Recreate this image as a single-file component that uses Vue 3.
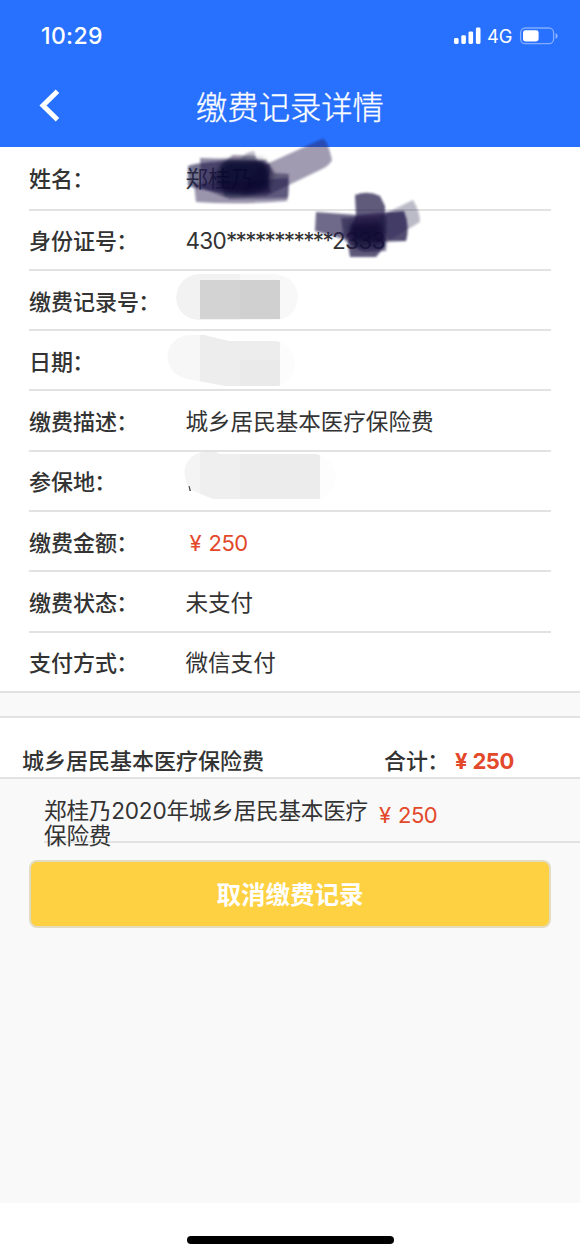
<script setup>
const rows = [
  { label: '姓名', value: '郑桂乃' },
  { label: '身份证号', id: ['430', '***********', '2333'] },
  { label: '缴费记录号' },
  { label: '日期' },
  { label: '缴费描述', value: '城乡居民基本医疗保险费' },
  { label: '参保地' },
  { label: '缴费金额', price: '250' },
  { label: '缴费状态', value: '未支付' },
  { label: '支付方式', value: '微信支付' },
]
</script>

<template>
  <div class="screen">
    <header class="top">
      <div class="status">
        <span class="time">10:29</span>
        <div class="indicators">
          <svg class="signal" width="28" height="18" viewBox="0 0 28 18" fill="#fff">
            <rect x="1" y="11" width="4.6" height="6" rx="1.4" />
            <rect x="8.3" y="8.2" width="4.6" height="8.8" rx="1.4" />
            <rect x="15.5" y="4.4" width="4.6" height="12.6" rx="1.4" />
            <rect x="22.9" y="0.6" width="4.6" height="16.4" rx="1.4" />
          </svg>
          <span class="net">4G</span>
          <svg class="battery" width="40" height="18" viewBox="0 0 40 18">
            <rect x="1.6" y="1" width="33" height="15.6" rx="4.6" fill="none" stroke="#fff" stroke-opacity=".42" stroke-width="1.3" />
            <rect x="4" y="3.2" width="15.6" height="11.2" rx="2.4" fill="#fff" />
            <path d="M36.600 6 Q38.600 7 38.600 9 T36.600 12 Z" fill="#fff" fill-opacity=".5" />
          </svg>
        </div>
      </div>
      <div class="nav">
        <svg class="back" width="24" height="38" viewBox="0 0 24 38">
          <path d="M19.500 4.200 L5 18.500 L19.500 32.700" fill="none" stroke="#fff" stroke-width="5" />
        </svg>
        <h1>缴费记录详情</h1>
      </div>
    </header>

    <section class="details">
      <div v-for="row in rows" :key="row.label" class="row">
        <span class="label">{{ row.label }}<span class="colon">：</span></span>
        <span v-if="row.id" class="value id">{{ row.id[0] }}<span class="stars">{{ row.id[1] }}</span>{{ row.id[2] }}</span>
        <span v-else-if="row.price" class="value price"><span class="yen">¥</span>{{ row.price }}</span>
        <span v-else class="value">{{ row.value }}</span>
      </div>
    </section>

    <div class="gap"></div>

    <section class="total">
      <span class="total-name">城乡居民基本医疗保险费</span>
      <span class="sum">合计<span class="colon">：</span></span>
      <span class="price strong"><span class="yen">¥</span>250</span>
    </section>

    <section class="item">
      <p>郑桂乃2020年城乡居民基本医疗保险费</p>
      <span class="price"><span class="yen">¥</span>250</span>
    </section>

    <button class="cancel">取消缴费记录</button>

    <footer><div class="home"></div></footer>

    <svg class="marks" width="580" height="520" viewBox="0 0 580 520">
      <defs>
        <filter id="soft" x="-10%" y="-10%" width="120%" height="120%"><feGaussianBlur stdDeviation="1.3" /></filter>
        <filter id="softer" x="-20%" y="-20%" width="140%" height="140%"><feGaussianBlur stdDeviation="3" /></filter>
      </defs>
      <g filter="url(#soft)" fill="#211a4a">
        <path d="M258 168 L322 139 Q327 138 332 160 Q330 165 322 169 L266 196 L240 196Z" fill-opacity=".43" />
        <path d="M194 184 L288 178 Q290 190 287 201 Q240 205 196 202Z" fill-opacity=".46" />
        <path d="M188 166 Q210 159 264 162 L271 193 Q220 196 188 186Z" fill-opacity=".62" />
        <path d="M200 158 L266 160 L274 173 L289 174 L288 198 L230 199 L201 188Z" fill-opacity=".5" />
        <path d="M247 153 L254 151 L256 158 L240 159Z" fill-opacity=".3" />
        <path d="M233 155 L255 156 L258 162 L270 164 L268 190 Q246 198 224 196 L220 165Z" fill="#150f3a" fill-opacity=".4" />
      </g>
      <path d="M226 161 L262 160 L272 172 L268 188 Q246 197 224 192 L212 178Z" fill="#080622" fill-opacity=".65" filter="url(#softer)" />
      <g filter="url(#soft)" fill="#211a4a">
        <path d="M376 218 L413 200 Q420 212 420 222 L390 240Z" fill-opacity=".3" />
        <path d="M316 212 L357 215 L404 211 Q410 226 406 241 L380 242 L340 238 L315 231Z" fill-opacity=".66" />
        <path d="M355 195 Q368 190 380 196 L385 206 L385 246 L376 257 L350 257 L347 237 L356 215Z" fill-opacity=".72" />
        <path d="M386 212 L404 211 Q410 226 406 241 L386 240Z" fill-opacity=".35" />
        <path d="M341 218 L387 216 L386 251 L363 252 L344 240Z" fill-opacity=".5" />
      </g>
      <path d="M348 224 L382 222 L384 246 L354 248Z" fill="#080622" fill-opacity=".55" filter="url(#softer)" />

      <clipPath id="pill1"><path d="M199 274 H273 Q297 276 298 297 Q296 318 277 320 H199 Q178 318 176 298 Q178 276 199 274Z" /></clipPath>
      <g clip-path="url(#pill1)">
        <rect x="170" y="270" width="70" height="55" fill="#f2f2f2" />
        <rect x="240" y="270" width="60" height="55" fill="#f8f8f8" />
        <rect x="200" y="280" width="40" height="39" fill="#d3d3d3" />
        <rect x="240" y="280" width="40" height="39" fill="#d0d0d0" />
      </g>

      <clipPath id="pill2"><path d="M188 335 H204 L229 341 H275 Q293 343 295 363 Q294 383 277 386 H225 L187 379 Q168 374 167.500 356 Q169 338 188 335Z" /></clipPath>
      <g clip-path="url(#pill2)">
        <rect x="160" y="330" width="40" height="60" fill="#f7f7f7" />
        <rect x="200" y="330" width="80" height="60" fill="#ededed" />
        <rect x="240" y="360" width="40" height="30" fill="#eaeaea" />
        <rect x="280" y="330" width="20" height="60" fill="#fcfcfc" />
      </g>

      <clipPath id="pill3"><path d="M203 452 H216 L220 454 H317 Q335 460 336 477 Q335 493 320 499 H213 L191 490 Q184 482 184.500 470 Q188 454 203 452Z" /></clipPath>
      <g clip-path="url(#pill3)">
        <rect x="180" y="450" width="20" height="50" fill="#f4f4f4" />
        <rect x="200" y="450" width="40" height="50" fill="#efefef" />
        <rect x="240" y="450" width="80" height="50" fill="#ececec" />
        <rect x="320" y="450" width="20" height="50" fill="#fdfdfd" />
      </g>
      <path d="M188.500 486 h1 l1.500 5 h-1.500Z" fill="#444" />
    </svg>
  </div>
</template>

<style>
body {
  margin: 0;
  background: #fff;
}
</style>

<style scoped>
.screen {
  position: relative;
  display: flex;
  flex-direction: column;
  width: 580px;
  height: 1256px;
  overflow: hidden;
  background: #f9f9f9;
  color: #333;
  font-family: Inter, "Noto Sans CJK SC", sans-serif;
  font-size: 22px;
  box-sizing: border-box;
}
.top {
  flex: none;
  height: 147px;
  background: #2871ff;
  color: #fff;
}
.status {
  display: flex;
  justify-content: space-between;
  align-items: center;
  height: 71px;
  padding: 0 21px 0 41px;
}
.time {
  font-size: 23px;
  font-weight: 500;
  letter-spacing: 0.35px;
}
.indicators {
  display: flex;
  align-items: center;
}
.net {
  width: 38px;
  padding-left: 6px;
  box-sizing: border-box;
  font-size: 18.3px;
  line-height: 20px;
}
.nav {
  display: grid;
  grid-template-columns: 62px 1fr 62px;
  align-items: center;
  height: 70px;
}
.back {
  justify-self: end;
}
h1 {
  margin: 0;
  text-align: center;
  font-size: 31.3px;
  font-weight: 300;
  line-height: 40px;
  padding-top: 4px;
  -webkit-text-stroke: 0.3px #fff;
}
.details {
  flex: none;
  height: 546px;
  display: grid;
  grid-template-rows: 63.6px repeat(7, 60.3px) 1fr;
  background: #fff;
  border-bottom: 2px solid #e2e2e2;
  box-sizing: border-box;
}
.row {
  display: flex;
  align-items: center;
  margin: 0 29px;
  border-bottom: 2px solid #e2e2e2;
  padding-top: 3px;
  box-sizing: border-box;
  line-height: 32px;
}
.row:last-child {
  border-bottom: 0;
}
.label {
  width: 156.5px;
  font-weight: 500;
  white-space: nowrap;
}
.colon {
  margin-left: -0.8px;
}
.value {
  font-size: 22.55px;
  white-space: nowrap;
}
.id {
  letter-spacing: -0.75px;
}
.stars {
  letter-spacing: -1.65px;
}
.price {
  color: #e3482b;
  font-size: 22px;
  letter-spacing: -0.5px;
}
.yen {
  display: inline-block;
  width: 19px;
}
.value.price {
  padding-left: 4px;
}
.gap {
  flex: none;
  height: 23px;
}
.total {
  flex: none;
  display: flex;
  align-items: flex-end;
  height: 63px;
  box-sizing: border-box;
  padding: 0 22px;
  background: #fff;
  border-top: 2px solid #e2e2e2;
  border-bottom: 2px solid #e2e2e2;
  line-height: 31px;
  font-weight: 500;
}
.total-name {
  width: 362px;
}
.sum {
  width: 71px;
  white-space: nowrap;
}
.strong {
  font-weight: 700;
}
.strong .yen {
  width: 17.5px;
}
.item {
  flex: none;
  display: flex;
  align-items: flex-start;
  height: 64px;
  margin-left: 44px;
  padding-top: 19px;
  box-sizing: border-box;
  border-bottom: 2px solid #e2e2e2;
}
.item p {
  width: 335px;
  margin: 0;
  font-size: 22.6px;
  line-height: 25px;
  letter-spacing: -0.2px;
}
.item .price {
  line-height: 35px;
}
.cancel {
  flex: none;
  height: 68px;
  margin: 17px 29px 0;
  padding: 2px 0 0;
  border: 2px solid #e3dcc0;
  border-radius: 8px;
  background: #fdd141;
  color: #fff;
  font: 700 24.5px/62px Inter, "Noto Sans CJK SC", sans-serif;
}
footer {
  margin-top: auto;
  height: 53px;
  display: flex;
  justify-content: center;
  align-items: flex-start;
  background: #fff;
}
.home {
  width: 207px;
  height: 8px;
  margin-top: 33px;
  border-radius: 4px;
  background: #000;
}
.marks {
  position: absolute;
  top: 0;
  left: 0;
  pointer-events: none;
}
</style>
